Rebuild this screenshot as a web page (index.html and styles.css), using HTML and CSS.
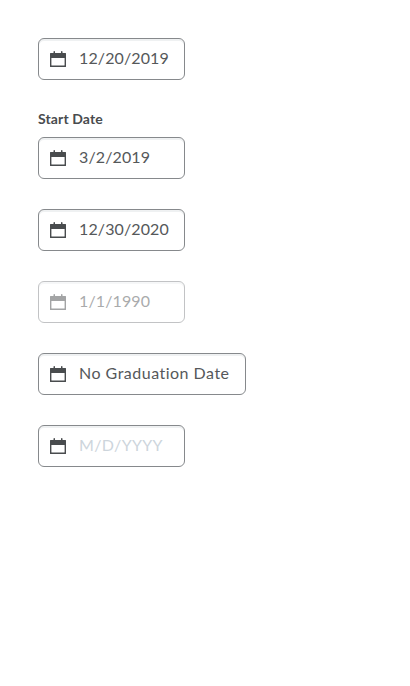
FILE: index.html
```html
<!DOCTYPE html>
<html lang="en">
<head>
<meta charset="utf-8">
<title>Date inputs</title>
<link rel="stylesheet" href="styles.css">
</head>
<body>
<svg class="defs" aria-hidden="true"><symbol id="cal" viewBox="0 0 18 18"><path fill-rule="evenodd" d="M1.500 3H4.500V1.700a.75.75 0 0 1 1.500 0V3h6V1.700a.75.75 0 0 1 1.500 0V3h3a.5.5 0 0 1 .5.5v13a.5.5 0 0 1-.5.5h-15a.5.5 0 0 1-.5-.5v-13a.5.5 0 0 1 .5-.5zM2.400 8v7a.5.5 0 0 0 .5.5h12.200a.5.5 0 0 0 .5-.5V8z"/></symbol></svg>
<main class="stack">
<div class="field date"><svg class="icon"><use href="#cal"/></svg><span>12/20/2019</span></div>
<div class="group"><div class="label">Start Date</div>
<div class="field date"><svg class="icon"><use href="#cal"/></svg><span>3/2/2019</span></div></div>
<div class="field date"><svg class="icon"><use href="#cal"/></svg><span>12/30/2020</span></div>
<div class="field date disabled"><svg class="icon"><use href="#cal"/></svg><span>1/1/1990</span></div>
<div class="field wide"><svg class="icon"><use href="#cal"/></svg><span>No Graduation Date</span></div>
<div class="field"><svg class="icon"><use href="#cal"/></svg><span class="placeholder">M/D/YYYY</span></div>
</main>
</body>
</html>
```
FILE: styles.css
```css
body { margin: 0; background: #fff; color: #494c4e; font-family: Lato, sans-serif; }
.defs { position: absolute; width: 0; height: 0; }
.stack { display: flex; flex-direction: column; align-items: flex-start; gap: 30px; padding: 38px; }
.field { box-sizing: border-box; display: flex; align-items: center; width: 147px; height: 42px; padding: 0 10px; gap: 12px; border: 1px solid #86898c; border-radius: 6px; box-shadow: inset 0 2px 0 rgba(177, 185, 190, 0.2); font-size: 16px; letter-spacing: 0.32px; line-height: 24px; white-space: nowrap; }
.field span { padding-bottom: 2px; color: #55585a; }
.field.date { letter-spacing: 0.12px; }
.field.wide { width: 208px; letter-spacing: 0.49px; }
.icon { width: 18px; height: 18px; flex: none; fill: currentColor; }
.field.disabled { opacity: 0.5; }
.field .placeholder { color: #cdd5dc; }
.label { font-size: 14px; font-weight: 700; letter-spacing: 0.12px; line-height: 18px; margin-bottom: 9px; }
```
